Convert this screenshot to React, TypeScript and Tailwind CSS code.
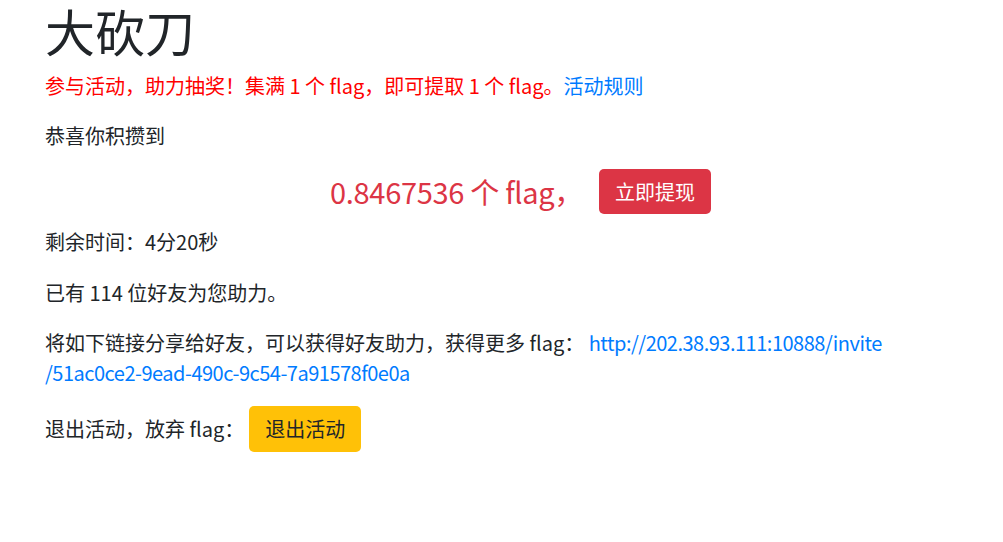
export default function App() {
  return (
    <div
      className="min-h-screen bg-white text-[#212529] text-[20px] leading-[30px]"
      style={{ fontFamily: '"Noto Sans CJK SC", Roboto, sans-serif' }}
    >
      <div className="px-[45px]">
        <h1 className="text-[50px] leading-[60px] font-normal mb-[11px]">大砍刀</h1>
        <p className="text-[#ff0000] mb-[20px]">
          参与活动，助力抽奖！集满 1 个 flag，即可提取 1 个 flag。
          <a href="#" className="text-[#007bff]">活动规则</a>
        </p>
        <p className="mb-[18px]">恭喜你积攒到</p>
        <div className="flex items-center pl-[285px] h-[45px] mb-[13px]">
          <span className="text-[#dc3545] text-[29px] leading-[45px] tracking-[-0.3px]">0.8467536 个 flag，</span>
          <button className="ml-[16px] bg-[#dc3545] text-white rounded-[5px] h-[45px] w-[112px] text-[20px]">
            立即提现
          </button>
        </div>
        <p className="mb-[21px]">剩余时间：4分20秒</p>
        <p className="mb-[20px]">已有 114 位好友为您助力。</p>
        <p className="mb-[18px] whitespace-nowrap">
          将如下链接分享给好友，可以获得好友助力，获得更多 flag：{' '}
          <a href="#" className="text-[#007bff] tracking-[-0.5px]">
            http://202.38.93.111:10888/invite
            <br />
            /51ac0ce2-9ead-490c-9c54-7a91578f0e0a
          </a>
        </p>
        <div className="flex items-center h-[46px]">
          <span>退出活动，放弃 flag：</span>
          <button className="ml-[5px] bg-[#ffc107] text-[#212529] rounded-[5px] h-[46px] w-[112px] text-[20px]">
            退出活动
          </button>
        </div>
      </div>
    </div>
  )
}
